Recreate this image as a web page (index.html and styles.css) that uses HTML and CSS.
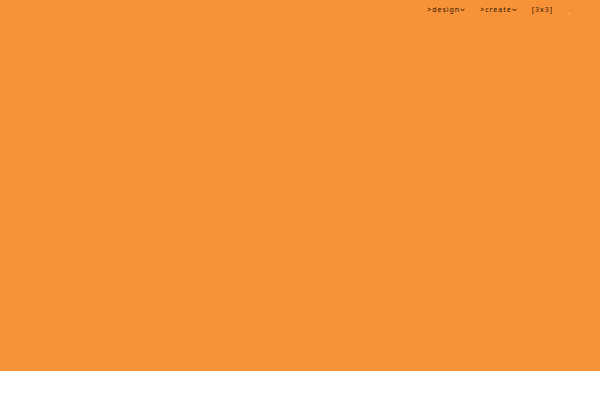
FILE: index.html
```html
<!DOCTYPE html>
<html lang="en">

<head>
    <meta charset="UTF-8">
    <meta name="viewport" content="width=device-width, initial-scale=1.0">
    <title>[3x3]</title>
    <link rel="stylesheet" href="styles.css">
</head>

<body>
    <header class="hero">
        <nav class="menu">
            <a href="#design">&gt;design<svg class="arrow" viewBox="0 0 5 4"><path d="M0.5 0.8L2.5 2.8L4.5 0.8"/></svg></a>
            <a href="#create">&gt;create<svg class="arrow" viewBox="0 0 5 4"><path d="M0.5 0.8L2.5 2.8L4.5 0.8"/></svg></a>
            <a href="#home">[3x3]</a>
            <a href="#more" class="more" aria-label="More"><span class="dash"></span></a>
        </nav>
    </header>
    <footer class="footer"></footer>
</body>

</html>
```

FILE: styles.css
```css
body {
    display: flex;
    flex-direction: column;
    min-height: 100vh;
    margin: 0;
    font-family: "Noto Sans", sans-serif;
    background-color: #fff;
}

.hero {
    flex: 1;
    background-color: #f89238;
}

.menu {
    display: flex;
    justify-content: flex-end;
    gap: 15px;
    padding: 4px 30px 0 0;
}

.menu a {
    display: flex;
    align-items: center;
    font-size: 7px;
    line-height: 11px;
    letter-spacing: 1px;
    color: #2b1600;
    text-decoration: none;
}

.arrow {
    width: 5px;
    height: 4px;
    fill: none;
    stroke: #2b1600;
    stroke-width: 1;
}

.menu .more {
    align-items: flex-end;
}

.dash {
    width: 2px;
    height: 1px;
    margin-bottom: 1px;
    background-color: #fbb87c;
}

.footer {
    height: 29px;
}
```
